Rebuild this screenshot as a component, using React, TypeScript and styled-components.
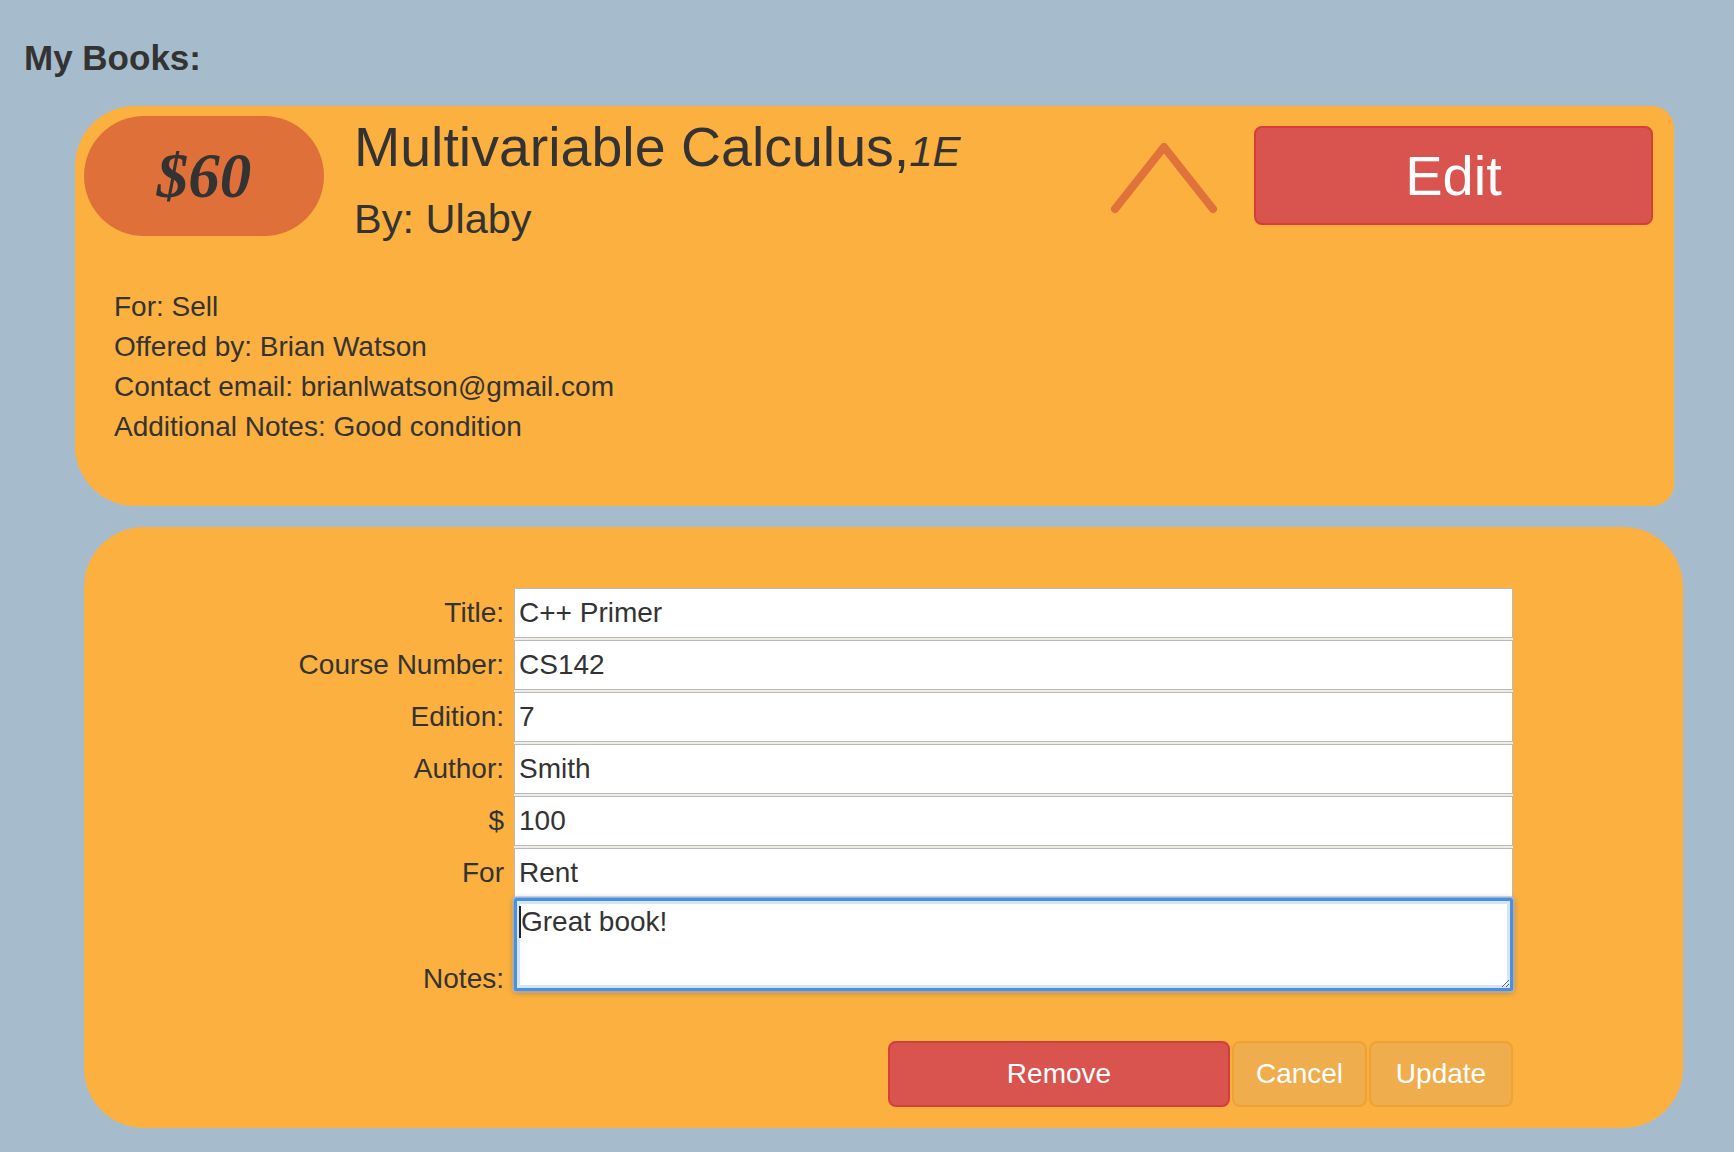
import React from "react";
import styled, { createGlobalStyle } from "styled-components";

const GlobalStyle = createGlobalStyle`
  html, body {
    margin: 0;
    padding: 0;
    background: #a6bccc;
  }
  body {
    font-family: "Liberation Sans", Arial, Helvetica, sans-serif;
    color: #333;
  }
  * { box-sizing: border-box; }
`;

const Page = styled.div`
  padding: 38px 0 24px 24px;
  min-height: 1152px;
`;

const Heading = styled.h3`
  margin: 0 0 28px;
  font-size: 35px;
  line-height: 40px;
  font-weight: bold;
  color: #333;
`;

const BookCard = styled.section`
  width: 1599px;
  margin-left: 51px;
  background: #fbb040;
  border-radius: 60px 22px 22px 60px;
  padding: 10px 21px 59px 9px;
`;

const Header = styled.div`
  display: flex;
  align-items: flex-start;
`;

const PricePill = styled.div`
  width: 240px;
  height: 120px;
  flex-shrink: 0;
  border-radius: 60px;
  background: #e0703a;
  display: flex;
  align-items: center;
  justify-content: center;
  font-family: "Liberation Serif", "Times New Roman", serif;
  font-weight: bold;
  font-style: italic;
  font-size: 63px;
  color: #333;
`;

const TitleBlock = styled.div`
  margin-left: 30px;
  flex: 1;
`;

const BookTitle = styled.h1`
  margin: 0;
  font-size: 55.5px;
  line-height: 62px;
  font-weight: normal;
  color: #333;
`;

const Edition = styled.span`
  font-size: 42px;
  font-style: italic;
`;

const Author = styled.div`
  margin-top: 13px;
  font-size: 41.5px;
  line-height: 45px;
`;

const Chevron = styled.svg`
  flex-shrink: 0;
  margin-top: 26px;
  margin-right: 36px;
`;

const BigButton = styled.button`
  width: 399px;
  height: 99px;
  margin-top: 10px;
  flex-shrink: 0;
  background: #d9534f;
  border: 2px solid #d43f3a;
  border-radius: 8px;
  color: #fff;
  font-family: inherit;
  font-size: 56px;
  padding: 0;
`;

const Details = styled.div`
  margin-top: 46px;
  padding-left: 30px;
  font-size: 28px;
  line-height: 40px;
`;

const FormCard = styled.form`
  width: 1599px;
  margin: 21px 0 0 60px;
  background: #fbb040;
  border-radius: 60px;
  padding: 61px 170px 21px 0;
  display: grid;
  grid-template-columns: 1fr 999px;
  column-gap: 10px;
  row-gap: 2px;
`;

const Label = styled.label<{ $bottom?: boolean }>`
  text-align: right;
  font-size: 28px;
  line-height: ${(p) => (p.$bottom ? "24px" : "40px")};
  align-self: ${(p) => (p.$bottom ? "end" : "center")};
  color: #333;
`;

const TextInput = styled.input`
  height: 50px;
  width: 100%;
  border: 1px solid #b9b9b9;
  box-shadow: 0 2px 0 #f1ede6;
  background: #fff;
  padding: 0 4px;
  font-family: inherit;
  font-size: 28px;
  color: #333;
  outline: none;
`;

const NotesField = styled.div`
  position: relative;
  height: 93px;
  margin-top: -2px;
`;

const NotesArea = styled.textarea`
  display: block;
  width: 100%;
  height: 93px;
  border: 3px solid #4b8fdd;
  border-radius: 2px;
  box-shadow: 0 0 0 2px rgba(150, 190, 240, 0.55), 0 1px 6px rgba(0, 0, 0, 0.35),
    inset 0 0 0 3px #d3e5f9;
  padding: 5px 4px;
  font-family: inherit;
  font-size: 28px;
  line-height: 32px;
  color: #333;
  outline: none;
  background: #fff;
`;

const Caret = styled.span`
  position: absolute;
  left: 5px;
  top: 8px;
  width: 2px;
  height: 32px;
  background: #222;
`;

const ButtonRow = styled.div`
  grid-column: 2;
  margin-top: 48px;
  display: flex;
  justify-content: flex-end;
  gap: 2px;
`;

const ActionButton = styled.button<{ $danger?: boolean; $width: number }>`
  height: 66px;
  width: ${(p) => p.$width}px;
  padding: 0;
  border-radius: 8px;
  border: 2px solid ${(p) => (p.$danger ? "#d43f3a" : "#eea236")};
  background: ${(p) => (p.$danger ? "#d9534f" : "#f0ad4e")};
  color: #fff;
  font-family: inherit;
  font-size: 28px;
`;

const fields: { label: string; value: string }[] = [
  { label: "Title:", value: "C++ Primer" },
  { label: "Course Number:", value: "CS142" },
  { label: "Edition:", value: "7" },
  { label: "Author:", value: "Smith" },
  { label: "$", value: "100" },
  { label: "For", value: "Rent" },
];

export default function App() {
  return (
    <>
      <GlobalStyle />
      <Page>
        <Heading>My Books:</Heading>
        <BookCard>
          <Header>
            <PricePill>$60</PricePill>
            <TitleBlock>
              <BookTitle>
                Multivariable Calculus,<Edition>1E</Edition>
              </BookTitle>
              <Author>By: Ulaby</Author>
            </TitleBlock>
            <Chevron width="108" height="72" viewBox="0 0 108 72">
              <polyline
                points="5,67 54,5 103,67"
                fill="none"
                stroke="#e0733c"
                strokeWidth="8"
                strokeLinecap="round"
                strokeLinejoin="round"
              />
            </Chevron>
            <BigButton type="button">Edit</BigButton>
          </Header>
          <Details>
            <div>For: Sell</div>
            <div>Offered by: Brian Watson</div>
            <div>Contact email: brianlwatson@gmail.com</div>
            <div>Additional Notes: Good condition</div>
          </Details>
        </BookCard>
        <FormCard onSubmit={(e) => e.preventDefault()}>
          {fields.map((f) => (
            <React.Fragment key={f.label}>
              <Label>{f.label}</Label>
              <TextInput defaultValue={f.value} />
            </React.Fragment>
          ))}
          <Label $bottom>Notes:</Label>
          <NotesField>
            <NotesArea defaultValue="Great book!" />
            <Caret />
          </NotesField>
          <ButtonRow>
            <ActionButton type="button" $danger $width={342}>
              Remove
            </ActionButton>
            <ActionButton type="button" $width={135}>
              Cancel
            </ActionButton>
            <ActionButton type="button" $width={144}>
              Update
            </ActionButton>
          </ButtonRow>
        </FormCard>
      </Page>
    </>
  );
}
